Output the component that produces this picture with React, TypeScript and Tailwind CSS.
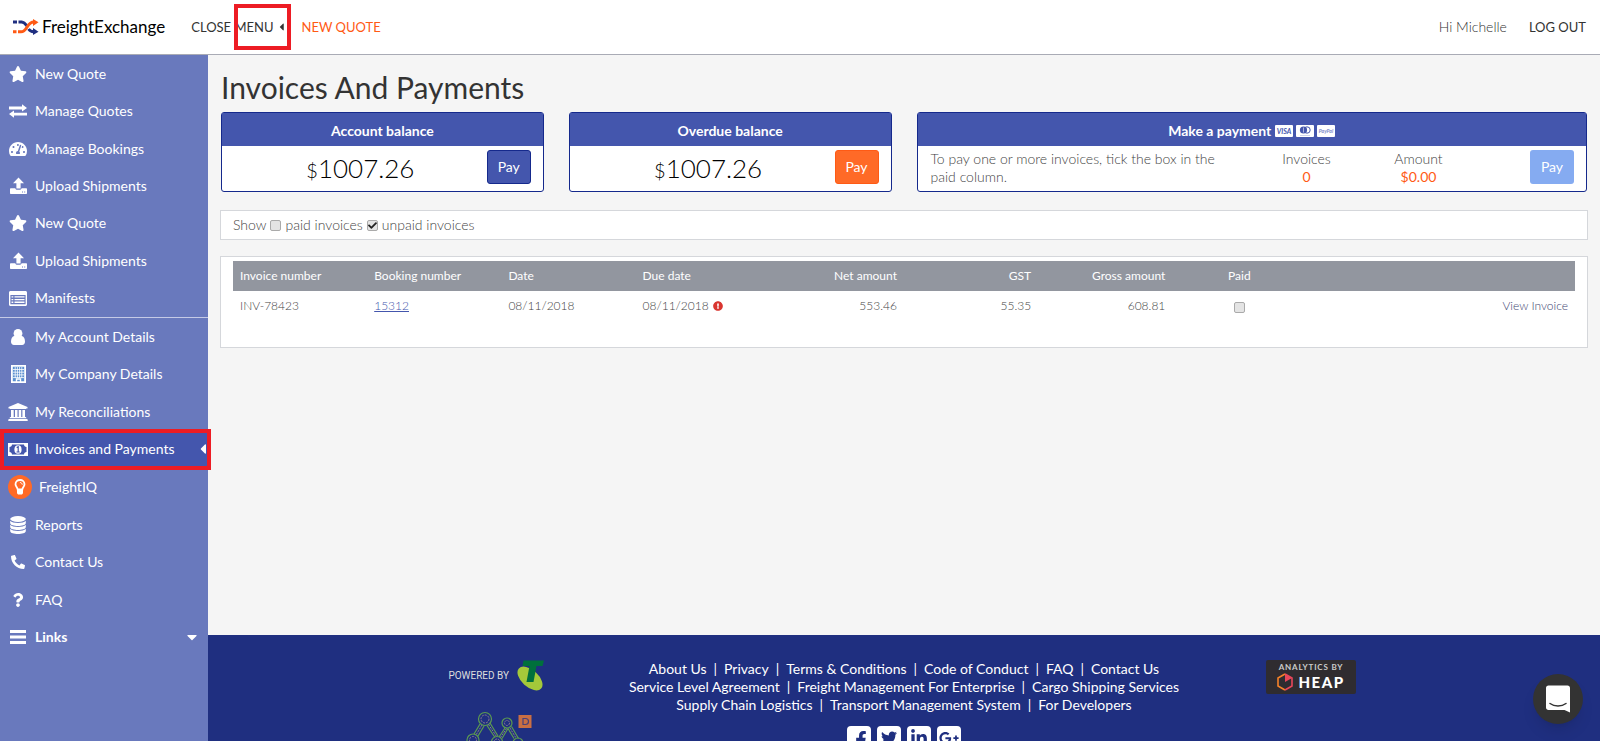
import { useState } from "react";
import type { ReactNode } from "react";
import {
  FaStar,
  FaTachometerAlt,
  FaPhone,
  FaQuestion,
  FaCaretDown,
  FaCaretLeft,
  FaCheck,
  FaExclamationCircle,
  FaFacebookF,
  FaTwitter,
  FaLinkedinIn,
  FaGooglePlusG,
} from "react-icons/fa";

const ExchangeIcon = () => (
  <svg viewBox="0 0 18 14" className="w-[18px] h-[14px]" fill="currentColor">
    <path d="M0 2.6h13V.3L18 4l-5 3.6V5.4H0zM18 8.7H5V6.4L0 10l5 3.7v-2.2h13z" />
  </svg>
);

const UploadIcon = () => (
  <svg viewBox="0 0 17 17" className="w-[17px] h-[17px]" fill="currentColor">
    <path d="M8.5.4 14 6.2h-3.4v5.3H6.4V6.2H3z" />
    <path
      fillRule="evenodd"
      d="M1 11.2h4.3c.3 1 1.1 1.5 2.1 1.5h2.2c1 0 1.8-.6 2.1-1.5H16c.6 0 1 .4 1 1V16c0 .6-.4 1-1 1H1c-.6 0-1-.4-1-1v-3.800c0-.6.4-1 1-1zm11 3.300v1h1v-1zm2.200 0v1h1v-1z"
    />
  </svg>
);

const ListIcon = () => (
  <svg viewBox="0 0 18 15" className="w-[18px] h-[15px]" fill="currentColor">
    <path
      fillRule="evenodd"
      d="M1.500 0h15c.8 0 1.500.7 1.500 1.500v12c0 .8-.7 1.500-1.500 1.500h-15C.7 15 0 14.300 0 13.500v-12C0 .7.7 0 1.500 0zM1.400 4v9.200h15.200V4z"
    />
    <path d="M2.500 5.200h1.800v1.400H2.500zm3 0h10v1.400h-10zm-3 2.700h1.800v1.400H2.500zm3 0h10v1.400h-10zm-3 2.700h1.800V12H2.500zm3 0h10V12h-10z" />
  </svg>
);

const UserIcon = () => (
  <svg viewBox="0 0 14 16" className="w-[14px] h-[16px]" fill="currentColor">
    <circle cx="7" cy="4.400" r="4.400" />
    <path d="M3 7C1 7.500 0 10 0 12.800 0 14.600 1.200 16 2.800 16h8.400c1.600 0 2.800-1.400 2.800-3.200C14 10 13 7.500 11 7z" />
  </svg>
);

const BuildingIcon = () => (
  <svg viewBox="0 0 15 18" className="w-[15px] h-[18px]" fill="none" stroke="currentColor">
    <path d="M.9.9h13.200v16.200H.9z" strokeWidth="1.800" fill="#5a8fd0" />
    <path d="M4.200 2v11M6.400 2v11M8.600 2v11M10.800 2v11" strokeWidth=".8" />
    <path d="M2 4.500h11M2 7.200h11M2 9.900h11M2 12.600h11" strokeWidth=".8" />
    <path d="M5.500 17v-3h4v3" strokeWidth="1.400" />
  </svg>
);

const BankIcon = () => (
  <svg viewBox="0 0 20 18" className="w-5 h-[18px]" fill="currentColor">
    <path d="M10 0 19.500 4v1.400h-1.300c0 .4-.3.700-.7.700h-15c-.4 0-.7-.3-.7-.7H.5V4z" />
    <path d="M3 7h2.700v7.500H3zM7 7h2.500v7.500H7zM10.700 7h2.500v7.500h-2.500zM14.400 7H17v7.500h-2.600z" />
    <path d="M2.500 14h15c.5 0 .8.300.8.800v.5H1.700v-.5c0-.5.3-.8.8-.8zM1.200 16h17.600c.5 0 .9.300.9.800V18H.3v-1.200c0-.5.4-.8.9-.8z" />
  </svg>
);

const MoneyIcon = () => (
  <svg viewBox="0 0 20 13" className="w-5 h-[13px]">
    <path
      fill="currentColor"
      fillRule="evenodd"
      d="M0 0h20v13H0zM4 1.500C4 2.900 2.900 4 1.500 4v5C2.900 9 4 10.100 4 11.500h12c0-1.400 1.100-2.500 2.500-2.500V4C17.100 4 16 2.900 16 1.500z"
    />
    <ellipse cx="10" cy="6.500" rx="3.600" ry="4.300" fill="currentColor" />
    <path d="M8.700 4.600 10.200 3.800v5M8.500 9h3.200" fill="none" stroke="#4456ad" strokeWidth="1.200" />
  </svg>
);

const DatabaseIcon = () => (
  <svg viewBox="0 0 16 18" className="w-4 h-[18px]" fill="currentColor">
    <ellipse cx="8" cy="3" rx="7.800" ry="2.900" />
    <path d="M.2 4.800C1.500 6.300 4.500 7 8 7s6.500-.7 7.800-2.200v2.400C15.500 8.900 12 10 8 10S.5 8.900.2 7.200z" />
    <path d="M.2 8.800C1.500 10.300 4.500 11 8 11s6.500-.7 7.800-2.200v2.400C15.500 12.900 12 14 8 14S.5 12.900.2 11.200z" />
    <path d="M.2 12.800C1.500 14.300 4.500 15 8 15s6.500-.7 7.800-2.200v2.400C15.500 16.900 12 18 8 18S.5 16.900.2 15.200z" />
  </svg>
);

const BarsIcon = () => (
  <svg viewBox="0 0 16 14" className="w-4 h-[14px]" fill="currentColor">
    <path d="M0 0h16v3H0zM0 5.500h16v3H0zM0 11h16v3H0z" />
  </svg>
);

const BulbIcon = () => (
  <svg viewBox="0 0 24 24" className="w-6 h-6">
    <circle cx="12" cy="12" r="12" fill="#ff6a27" />
    <path
      d="M12 5c2.600 0 4.500 1.800 4.500 4.200 0 2.300-1.900 3.100-2.200 5.300H9.700C9.400 12.300 7.500 11.500 7.500 9.200 7.500 6.800 9.400 5 12 5z"
      fill="none"
      stroke="#fff"
      strokeWidth="1.800"
    />
    <path d="M12.300 7.500c1.100.1 1.800.8 1.900 1.800" fill="none" stroke="#fff" strokeLinecap="round" />
    <path d="M9 14h6v4c0 .8-1 1.500-1.600 1.500h-2.800C10 19.500 9 18.800 9 18z" fill="#fff" />
  </svg>
);

const LogoMark = () => (
  <svg viewBox="0 0 26 16" className="w-[26px] h-4" fill="none" strokeWidth="3">
    <path d="M0 3h4M5.500 3H9" stroke="#1f2f80" />
    <path d="M9 3c2.500.3 3.500 2 4.800 3.800M15.500 10c1.200 1.700 2.500 2.800 5 2.800" stroke="#1f2f80" />
    <path d="M20 9 25.500 12.800 20 16z" fill="#1f2f80" />
    <path d="M0 12.800h3.500M5 12.800h3c6.500 0 5.500-9.800 13-9.800" stroke="#ff5a14" />
    <path d="M20 0 25.500 3.200 20 7z" fill="#ff5a14" />
  </svg>
);

type MenuItem = { label: string; icon: ReactNode; active?: boolean };

const bookingMenu: MenuItem[] = [
  { label: "New Quote", icon: <FaStar className="w-[18px] h-4" /> },
  { label: "Manage Quotes", icon: <ExchangeIcon /> },
  { label: "Manage Bookings", icon: <FaTachometerAlt className="w-[18px] h-4" /> },
  { label: "Upload Shipments", icon: <UploadIcon /> },
  { label: "New Quote", icon: <FaStar className="w-[18px] h-4" /> },
  { label: "Upload Shipments", icon: <UploadIcon /> },
  { label: "Manifests", icon: <ListIcon /> },
];

const accountMenu: MenuItem[] = [
  { label: "My Account Details", icon: <UserIcon /> },
  { label: "My Company Details", icon: <BuildingIcon /> },
  { label: "My Reconciliations", icon: <BankIcon /> },
  { label: "Invoices and Payments", icon: <MoneyIcon />, active: true },
  { label: "FreightIQ", icon: <BulbIcon /> },
  { label: "Reports", icon: <DatabaseIcon /> },
  { label: "Contact Us", icon: <FaPhone className="w-[14px] h-[14px] -scale-x-100" /> },
  { label: "FAQ", icon: <FaQuestion className="w-[14px] h-[14px]" /> },
];

const footerLinks = [
  ["About Us", "Privacy", "Terms & Conditions", "Code of Conduct", "FAQ", "Contact Us"],
  ["Service Level Agreement", "Freight Management For Enterprise", "Cargo Shipping Services"],
  ["Supply Chain Logistics", "Transport Management System", "For Developers"],
];

const SidebarItem = ({ label, icon, active }: MenuItem) => (
  <a
    href="#"
    className={
      active
        ? "relative flex items-center gap-[7px] pl-2 bg-[#4456ad] text-white"
        : "flex items-center gap-[7px] pl-2 text-white"
    }
  >
    <span className="flex justify-center min-w-5 shrink-0">{icon}</span>
    {label}
    {active && (
      <>
        <FaCaretLeft className="ml-auto w-[10px] h-4" />
        <span className="absolute -top-[2px] -bottom-[2px] left-0 -right-[3px] border-4 border-[#ed1c24]" />
      </>
    )}
  </a>
);

const Sidebar = () => (
  <nav className="relative z-10 w-52 shrink-0 bg-[#6979bd] text-sm">
    <div className="grid auto-rows-fr h-[263px] border-b border-[#c5cae6]">
      {bookingMenu.map((item, i) => (
        <SidebarItem key={i} {...item} />
      ))}
    </div>
    <div className="grid auto-rows-fr h-[338px]">
      {accountMenu.map((item) => (
        <SidebarItem key={item.label} {...item} />
      ))}
      <button type="button" className="flex items-center gap-[7px] pl-2 pr-[11px] font-bold text-white">
        <span className="flex justify-center w-5">
          <BarsIcon />
        </span>
        Links
        <FaCaretDown className="ml-auto w-[10px] h-4" />
      </button>
    </div>
  </nav>
);

const Header = () => (
  <header className="flex items-center h-[55px] shrink-0 pl-[13px] pr-[14px] bg-white border-b border-[#a9abb5] text-[13px] leading-5 text-[#333]">
    <a href="#" className="flex items-center gap-[3px] text-[17px] text-black">
      <LogoMark />
      FreightExchange
    </a>
    <button type="button" className="relative flex items-center gap-1 ml-[26px]">
      CLOSE MENU
      <FaCaretLeft className="w-[7px] h-3" />
      <span className="absolute -top-[13px] -bottom-[13px] -right-[6px] w-[57px] border-4 border-[#ed1c24]" />
    </button>
    <a href="#" className="ml-[17px] text-[#ff5a14]">
      NEW QUOTE
    </a>
    <span className="ml-auto text-sm font-light">Hi Michelle</span>
    <a href="#" className="ml-[22px]">
      LOG OUT
    </a>
  </header>
);

const Card = ({
  title,
  className,
  children,
}: {
  title: ReactNode;
  className?: string;
  children: ReactNode;
}) => (
  <section className={`flex flex-col rounded-[3px] border border-[#15298c] bg-white ${className ?? ""}`}>
    <h2 className="flex items-center justify-center gap-1 h-[33px] pt-[2px] bg-[#4456ad] text-sm font-bold text-white">
      {title}
    </h2>
    <div className="flex h-[45px] px-3">{children}</div>
  </section>
);

const PaymentBadges = () => (
  <span className="flex gap-[3px]">
    <svg viewBox="0 0 18 12" className="w-[18px] h-3">
      <rect width="18" height="12" rx="1" fill="#fff" />
      <text x="9" y="8.500" textAnchor="middle" fontSize="7" fontStyle="italic" fontWeight="700" fill="#4456ad">
        VISA
      </text>
    </svg>
    <svg viewBox="0 0 18 12" className="w-[18px] h-3">
      <rect width="18" height="12" rx="1" fill="#fff" />
      <circle cx="7.500" cy="5" r="3.600" fill="#4456ad" />
      <circle cx="11" cy="5" r="3.200" fill="none" stroke="#4456ad" />
      <path d="M7.500 2.500v5M4 10.500h10" stroke="#c5cae6" strokeWidth=".8" />
    </svg>
    <svg viewBox="0 0 18 12" className="w-[18px] h-3">
      <rect width="18" height="12" rx="1" fill="#fff" />
      <text x="9" y="7.500" textAnchor="middle" fontSize="5" fontStyle="italic" fontWeight="700" fill="#7c89c8">
        PayPal
      </text>
    </svg>
  </span>
);

const BalanceAmount = () => (
  <p className="flex flex-1 items-baseline justify-center text-[26px] leading-[44px] font-light text-black">
    <span className="text-[20px]">$</span>1007.26
  </p>
);

const Checkbox = ({
  id,
  label,
  defaultChecked,
}: {
  id: string;
  label?: string;
  defaultChecked?: boolean;
}) => {
  const [checked, setChecked] = useState(!!defaultChecked);

  return (
    <span className="relative inline-flex align-middle">
      <input
        id={id}
        type="checkbox"
        aria-label={label}
        className="appearance-none w-[11px] h-[11px] rounded-[2px] border border-[#aaa] bg-[#e4e4e4]"
        checked={checked}
        onChange={() => setChecked((prev) => !prev)}
      />
      {checked && (
        <FaCheck className="absolute top-[1px] left-[1px] w-[9px] h-[9px] text-[#222] pointer-events-none" />
      )}
    </span>
  );
};

const Invoices = () => (
  <main className="flex-1 px-3 pt-4 text-[#444]">
    <h1 className="pl-[1px] text-[30px] leading-8 text-[#333]">Invoices And Payments</h1>

    <div className="grid grid-cols-4 gap-[25px] mt-[9px] px-[1px]">
      <Card title="Account balance">
        <BalanceAmount />
        <button
          type="button"
          className="mt-1 w-11 h-[34px] rounded-[3px] border border-[#15298c] bg-[#4456ad] text-sm text-white"
        >
          Pay
        </button>
      </Card>
      <Card title="Overdue balance">
        <BalanceAmount />
        <button
          type="button"
          className="mt-1 w-11 h-[34px] rounded-[3px] border border-[#ff5a14] bg-[#ff6a27] text-sm text-white"
        >
          Pay
        </button>
      </Card>
      <Card
        className="col-span-2"
        title={
          <>
            Make a payment <PaymentBadges />
          </>
        }
      >
        <div className="flex flex-1 pl-[1px] pt-1 text-sm leading-[18px] font-light">
          <p className="w-[320px] pr-4">
            To pay one or more invoices, tick the box in the paid column.
          </p>
          <p className="w-28 text-center">
            Invoices
            <span className="block font-normal text-[#ff5a14]">0</span>
          </p>
          <p className="w-28 text-center">
            Amount
            <span className="block font-normal text-[#ff5a14]">$0.00</span>
          </p>
        </div>
        <button
          type="button"
          disabled
          className="mt-1 w-11 h-[34px] rounded-[3px] bg-[#85abf1] text-sm text-white"
        >
          Pay
        </button>
      </Card>
    </div>

    <div className="flex items-center gap-1 h-[30px] mt-[18px] pl-3 border border-[#d5d7db] bg-white text-sm font-light">
      Show
      <Checkbox id="show-paid" />
      <label htmlFor="show-paid">paid invoices</label>
      <Checkbox id="show-unpaid" defaultChecked />
      <label htmlFor="show-unpaid">unpaid invoices</label>
    </div>

    <div className="mt-4 px-3 pt-1 pb-[26px] border border-[#d5d7db] bg-white">
      <table className="w-full table-fixed text-xs">
        <thead>
          <tr className="h-[30px] bg-[#92969f] text-left text-white">
            <th className="w-1/10 px-[7px] font-normal">Invoice number</th>
            <th className="w-1/10 px-[7px] font-normal">Booking number</th>
            <th className="w-1/10 px-[7px] font-normal">Date</th>
            <th className="w-1/10 px-[7px] font-normal">Due date</th>
            <th className="w-1/10 px-[7px] font-normal text-right">Net amount</th>
            <th className="w-1/10 px-[7px] font-normal text-right">GST</th>
            <th className="w-1/10 px-[7px] font-normal text-right">Gross amount</th>
            <th className="w-1/10 px-[7px] font-normal text-center">Paid</th>
            <th aria-label="Actions" />
          </tr>
        </thead>
        <tbody>
          <tr className="h-[30px] font-light">
            <td className="px-[7px]">INV-78423</td>
            <td className="px-[7px]">
              <a href="#" className="text-[#4456ad] underline">
                15312
              </a>
            </td>
            <td className="px-[7px]">08/11/2018</td>
            <td className="px-[7px]">
              <span className="flex items-center gap-1">
                08/11/2018
                <FaExclamationCircle className="w-[10px] h-[10px] text-[#d9352f]" />
              </span>
            </td>
            <td className="px-[7px] text-right">553.46</td>
            <td className="px-[7px] text-right">55.35</td>
            <td className="px-[7px] text-right">608.81</td>
            <td className="px-[7px] text-center">
              <Checkbox id="paid-78423" label="Paid" />
            </td>
            <td className="px-[7px] text-right">
              <a href="#" className="text-[#3c4370]">
                View Invoice
              </a>
            </td>
          </tr>
        </tbody>
      </table>
    </div>
  </main>
);

const TelstraLogo = () => (
  <svg viewBox="0 0 27 31" className="w-[27px] h-[31px]">
    <ellipse cx="13" cy="18.500" rx="15" ry="8.500" transform="rotate(42 13 18.500)" fill="#a4c93a" />
    <path d="M6.500.5H27L25.500 6h-6l-3 16H9.500l3-16H5.500z" fill="#00703c" />
  </svg>
);

const NetworkLogo = () => (
  <svg viewBox="0 0 66 31" className="w-[66px] h-[31px]" fill="none">
    <g stroke="#5c9a50" strokeWidth="1.200">
      <path d="M14 13 8 23M18 15l-6 10M21 14.500l8 12M24 12l8 13M39 17l-6 9M42 17.500l-6 10M42 17.500l6 10M45.500 15.500l7 12" />
      <circle cx="19" cy="8" r="6.500" />
      <circle cx="41" cy="12" r="5" />
      <circle cx="7" cy="29" r="6" />
      <circle cx="31" cy="31" r="5.500" />
      <circle cx="52" cy="32" r="5" />
    </g>
    <g stroke="#8a7a90" strokeDasharray="2 1">
      <circle cx="19" cy="8" r="4" />
      <circle cx="41" cy="12" r="2.500" />
      <circle cx="7" cy="29" r="3.500" />
      <circle cx="31" cy="31" r="3" />
      <path d="M16 14 10 24M22.500 13.500l8 12M40.500 17.500l-6 9M44 17l6 10" />
    </g>
    <rect x="52.500" y="4" width="13" height="13" fill="#c96f43" />
    <path d="M57 7.500h2.500c2 0 3 1.200 3 3s-1 3-3 3H57z" stroke="#4a4078" strokeWidth="1.200" />
  </svg>
);

const HeapBadge = () => (
  <a href="#" className="flex flex-col items-center w-[90px] h-[34px] rounded-xs bg-[#2f2c30] text-white">
    <span className="mt-[2px] text-[8px] leading-[10px] font-bold tracking-widest text-[#ccc]">ANALYTICS BY</span>
    <span className="flex items-center gap-[5px] text-[15px] leading-5 font-black tracking-widest">
      <svg viewBox="0 0 16 18" className="w-4 h-[18px]" fill="none">
        <path d="M8 1 1 5v8l7 4" stroke="#f5822a" strokeWidth="1.600" />
        <path d="M8 17l7-4V5L8 1" stroke="#e8475a" strokeWidth="1.600" />
        <path d="M8 1v8l7-4z" fill="#e8475a" />
      </svg>
      HEAP
    </span>
  </a>
);

const SocialLink = ({ label, children }: { label: string; children: ReactNode }) => (
  <a
    href="#"
    aria-label={label}
    className="flex items-center justify-center w-6 h-6 rounded bg-white text-[#1f2f80]"
  >
    {children}
  </a>
);

const Footer = () => (
  <footer className="grid grid-cols-[1fr_560px_1fr] h-[106px] shrink-0 overflow-hidden bg-[#1f2f80] text-white">
    <div className="flex flex-col items-end pt-[25px] pr-20">
      <div className="flex items-center gap-2 font-['Roboto',sans-serif] text-[10px] text-[#ddd]">
        POWERED BY
        <TelstraLogo />
      </div>
      <div className="mt-5 pr-3">
        <NetworkLogo />
      </div>
    </div>
    <div className="flex flex-col items-center pt-[25px]">
      {footerLinks.map((row) => (
        <ul key={row[0]} className="flex text-sm leading-[18px] whitespace-nowrap">
          {row.map((label, i) => (
            <li key={label}>
              {i > 0 && <span className="px-[7px]">|</span>}
              <a href="#">{label}</a>
            </li>
          ))}
        </ul>
      ))}
      <div className="flex gap-[6px] mt-3">
        <SocialLink label="Facebook">
          <FaFacebookF className="w-[18px] h-[18px] mt-1 ml-1" />
        </SocialLink>
        <SocialLink label="Twitter">
          <FaTwitter className="w-4 h-4" />
        </SocialLink>
        <SocialLink label="LinkedIn">
          <FaLinkedinIn className="w-[18px] h-[18px]" />
        </SocialLink>
        <SocialLink label="Google Plus">
          <FaGooglePlusG className="w-5 h-5" />
        </SocialLink>
      </div>
    </div>
    <div className="pt-[25px] pl-[82px]">
      <HeapBadge />
    </div>
  </footer>
);

const ChatButton = () => (
  <button
    type="button"
    aria-label="Open chat"
    className="fixed z-20 right-[17px] bottom-[17px] flex items-center justify-center w-[50px] h-[50px] rounded-full bg-[#333] shadow-lg"
  >
    <svg viewBox="0 0 26 28" className="w-[26px] h-7">
      <path d="M3.500.5h19C24 .5 25 1.500 25 3v24.500L19.500 25h-16C2 25 1 24 1 22.500V3C1 1.500 2 .5 3.500.5z" fill="#fff" />
      <path d="M5 18.500c4.500 3.300 11.500 3.300 16 0" fill="none" stroke="#333" strokeWidth="1.500" strokeLinecap="round" />
    </svg>
  </button>
);

const App: React.FC = () => {
  return (
    <div className="flex flex-col h-screen overflow-hidden bg-[#f5f5f5] font-['Lato',sans-serif]">
      <Header />
      <div className="flex flex-1 min-h-0">
        <Sidebar />
        <div className="flex flex-col flex-1 min-w-0">
          <Invoices />
          <Footer />
        </div>
      </div>
      <ChatButton />
    </div>
  );
};

export default App;
